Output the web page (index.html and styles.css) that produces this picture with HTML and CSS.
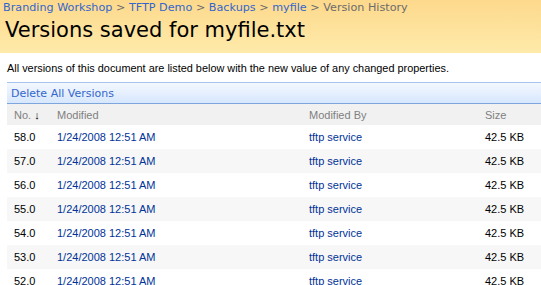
FILE: index.html
```html
<!DOCTYPE html>
<html lang="en">
<head>
    <meta charset="UTF-8">
    <title>Version History</title>
    <link rel="stylesheet" href="styles.css">
</head>
<body>

    <!-- Title area -->
    <div class="titlearea">
        <div class="crumbs">
            <a href="#">Branding Workshop</a> &gt; <a href="#">TFTP Demo</a> &gt; <a href="#">Backups</a> &gt; <a href="#">myfile</a> &gt; <span class="current">Version History</span>
        </div>
        <h1>Versions saved for myfile.txt</h1>
    </div>

    <div class="main">
        <p class="intro">All versions of this document are listed below with the new value of any changed properties.</p>

        <div class="toolbar">
            <a href="#">Delete All Versions</a>
        </div>

        <table class="versions">
            <tr class="head">
                <th class="c-no">No. <span class="arrow">&#8595;</span></th>
                <th class="c-mod">Modified</th>
                <th class="c-by">Modified By</th>
                <th class="c-size">Size</th>
            </tr>
            <tr><td>58.0</td><td><a href="#">1/24/2008 12:51 AM</a></td><td><a href="#">tftp service</a></td><td>42.5 KB</td></tr>
            <tr class="alt"><td>57.0</td><td><a href="#">1/24/2008 12:51 AM</a></td><td><a href="#">tftp service</a></td><td>42.5 KB</td></tr>
            <tr><td>56.0</td><td><a href="#">1/24/2008 12:51 AM</a></td><td><a href="#">tftp service</a></td><td>42.5 KB</td></tr>
            <tr class="alt"><td>55.0</td><td><a href="#">1/24/2008 12:51 AM</a></td><td><a href="#">tftp service</a></td><td>42.5 KB</td></tr>
            <tr><td>54.0</td><td><a href="#">1/24/2008 12:51 AM</a></td><td><a href="#">tftp service</a></td><td>42.5 KB</td></tr>
            <tr class="alt"><td>53.0</td><td><a href="#">1/24/2008 12:51 AM</a></td><td><a href="#">tftp service</a></td><td>42.5 KB</td></tr>
            <tr><td>52.0</td><td><a href="#">1/24/2008 12:51 AM</a></td><td><a href="#">tftp service</a></td><td>42.5 KB</td></tr>
        </table>
    </div>

</body>
</html>
```

FILE: styles.css
```css
body {
    margin: 0;
    background-color: #fff;
    font-family: "Liberation Sans", Arial, sans-serif;
    font-size: 11px;
    overflow: hidden;
}
a {
    text-decoration: none;
}
.titlearea {
    height: 53px;
    padding: 1px 0 0 3px;
    background: linear-gradient(#fdd98c, #feeaaa);
    box-sizing: border-box;
}
.crumbs {
    font-family: "DejaVu Sans", Verdana, sans-serif;
    font-size: 11.2px;
    line-height: 14px;
    color: #6b6b6b;
}
.crumbs a {
    color: #3366cc;
}
h1 {
    margin: 2px 0 0 2px;
    font-family: "DejaVu Sans", Verdana, sans-serif;
    font-weight: normal;
    font-size: 21px;
    line-height: 26px;
    color: #000;
}
.main {
    padding: 0 0 0 7px;
}
.intro {
    margin: 8px 0 0 0;
    font-size: 10.9px;
    line-height: 14px;
    color: #000;
}
.toolbar {
    margin-top: 7px;
    height: 20px;
    padding: 0 4px;
    background: linear-gradient(#f4f8ff, #d7e7fd);
    border-top: 1px solid #a6c4ee;
    border-bottom: 1px solid #7ea5dc;
    line-height: 20px;
}
.toolbar a {
    font-family: "DejaVu Sans", Verdana, sans-serif;
    font-size: 11px;
    color: #3366cc;
}
.versions {
    width: 100%;
    border-collapse: collapse;
}
.versions th {
    background-color: #f1f1f1;
    color: #808080;
    font-weight: normal;
    text-align: left;
    height: 21px;
    padding: 0;
}
.versions td {
    height: 24px;
    padding: 0;
    color: #000;
}
.versions tr.alt td {
    background-color: #f7f7f7;
}
.versions th:first-child,
.versions td:first-child {
    padding-left: 7px;
    width: 43px;
}
.versions td a {
    color: #003399;
}
.c-mod {
    width: 252px;
}
.c-by {
    width: 176px;
}
.arrow {
    color: #000;
}
```
